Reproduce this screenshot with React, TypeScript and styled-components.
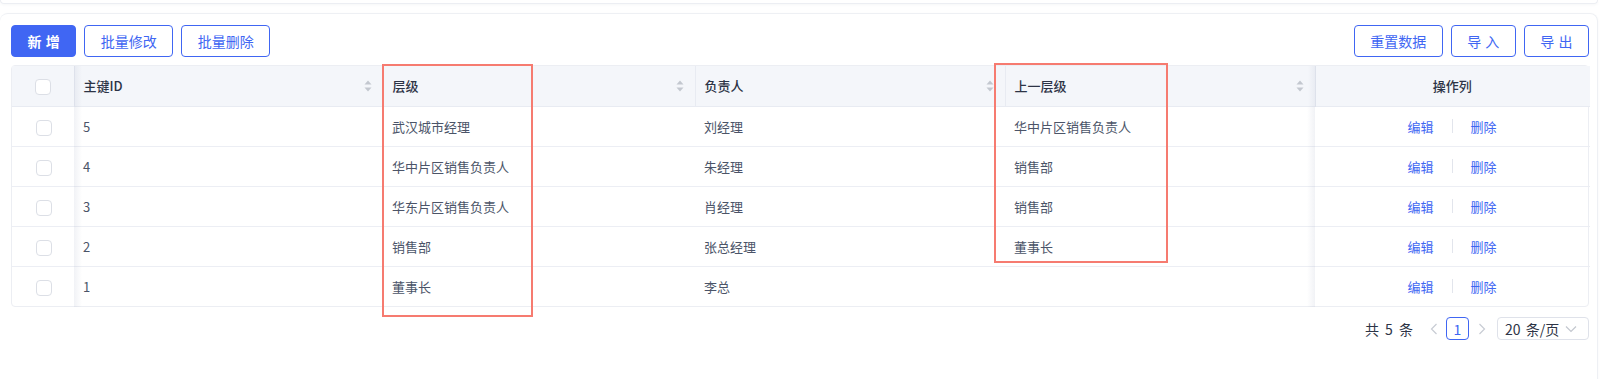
import styled, { createGlobalStyle } from "styled-components";

const GlobalStyle = createGlobalStyle`
  html, body {
    margin: 0;
    padding: 0;
    background: #ffffff;
    font-family: "Noto Sans CJK SC", "Noto Sans", sans-serif;
    overflow: hidden;
  }
`;

const BLUE = "#4066f3";

type Row = {
  id: number;
  level: string;
  owner: string;
  parent: string;
};

const rows: Row[] = [
  { id: 5, level: "武汉城市经理", owner: "刘经理", parent: "华中片区销售负责人" },
  { id: 4, level: "华中片区销售负责人", owner: "朱经理", parent: "销售部" },
  { id: 3, level: "华东片区销售负责人", owner: "肖经理", parent: "销售部" },
  { id: 2, level: "销售部", owner: "张总经理", parent: "董事长" },
  { id: 1, level: "董事长", owner: "李总", parent: "" },
];

const SortIcon = () => (
  <SortWrap>
    <svg width="8" height="12" viewBox="0 0 8 12">
      <path d="M4 0.5 L7.5 4.5 H0.5 Z" fill="#c3c7cf" />
      <path d="M4 11.5 L7.5 7.5 H0.5 Z" fill="#c3c7cf" />
    </svg>
  </SortWrap>
);

const App = () => {
  return (
    <Page>
      <GlobalStyle />
      <TopCard />
      <MainCard>
        <Toolbar>
          <ButtonGroup>
            <Button $primary>新 增</Button>
            <Button>批量修改</Button>
            <Button>批量删除</Button>
          </ButtonGroup>
          <ButtonGroup>
            <Button>重置数据</Button>
            <Button>导 入</Button>
            <Button>导 出</Button>
          </ButtonGroup>
        </Toolbar>

        <TableWrap>
          <Table>
            <colgroup>
              <col style={{ width: 62 }} />
              <col style={{ width: 309 }} />
              <col style={{ width: 312 }} />
              <col style={{ width: 310 }} />
              <col style={{ width: 310 }} />
              <col style={{ width: 275 }} />
            </colgroup>
            <thead>
              <tr>
                <Th $center $fixedLeft>
                  <Checkbox />
                </Th>
                <Th>
                  <HeadCell>
                    主键ID
                    <SortIcon />
                  </HeadCell>
                </Th>
                <Th>
                  <HeadCell>
                    层级
                    <SortIcon />
                  </HeadCell>
                </Th>
                <Th>
                  <HeadCell>
                    负责人
                    <SortIcon />
                  </HeadCell>
                </Th>
                <Th>
                  <HeadCell>
                    上一层级
                    <SortIcon />
                  </HeadCell>
                </Th>
                <Th $center $fixedRight>
                  操作列
                </Th>
              </tr>
            </thead>
            <tbody>
              {rows.map((r) => (
                <tr key={r.id}>
                  <Td $center $fixedLeft>
                    <Checkbox />
                  </Td>
                  <Td>{r.id}</Td>
                  <Td>{r.level}</Td>
                  <Td>{r.owner}</Td>
                  <Td>{r.parent}</Td>
                  <Td $center $fixedRight>
                    <Actions>
                      <LinkText>编辑</LinkText>
                      <Divider />
                      <LinkText>删除</LinkText>
                    </Actions>
                  </Td>
                </tr>
              ))}
            </tbody>
          </Table>
          <Highlight style={{ left: 370, top: -2, width: 147, height: 249 }} />
          <Highlight style={{ left: 982, top: -3, width: 170, height: 196 }} />
        </TableWrap>

        <Pagination>
          <Total>共 5 条</Total>
          <Arrow>
            <svg width="8" height="12" viewBox="0 0 8 12">
              <path d="M6.5 1 L1.5 6 L6.5 11" fill="none" stroke="#c8ccd4" strokeWidth="1.2" />
            </svg>
          </Arrow>
          <PageBox>1</PageBox>
          <Arrow>
            <svg width="8" height="12" viewBox="0 0 8 12">
              <path d="M1.5 1 L6.5 6 L1.5 11" fill="none" stroke="#c8ccd4" strokeWidth="1.2" />
            </svg>
          </Arrow>
          <SizeSelect>
            <span>20 条/页</span>
            <svg width="12" height="8" viewBox="0 0 12 8">
              <path d="M1 1.5 L6 6.5 L11 1.5" fill="none" stroke="#c3c7cf" strokeWidth="1.2" />
            </svg>
          </SizeSelect>
        </Pagination>
      </MainCard>
    </Page>
  );
};

export default App;

const Page = styled.div`
  width: 1602px;
  height: 379px;
  overflow: hidden;
`;

const TopCard = styled.div`
  width: 1596px;
  height: 3px;
  border: 1px solid #eceef3;
  border-top: none;
  border-radius: 0 0 8px 8px;
  box-shadow: 0 1px 3px rgba(30, 40, 80, 0.04);
`;

const MainCard = styled.div`
  width: 1578px;
  min-height: 400px;
  margin-top: 9px;
  padding: 11px 8px 0 11px;
  border: 1px solid #eef0f4;
  border-left: none;
  border-radius: 8px;
  box-shadow: 0 1px 3px rgba(30, 40, 80, 0.04);
`;

const Toolbar = styled.div`
  display: flex;
  justify-content: space-between;
  align-items: center;
  margin-bottom: 8px;
`;

const ButtonGroup = styled.div`
  display: flex;
  gap: 8px;
`;

const Button = styled.button<{ $primary?: boolean }>`
  height: 32px;
  padding: 0 15.5px;
  border: 1px solid ${BLUE};
  border-radius: 4px;
  background: ${(p) => (p.$primary ? BLUE : "#ffffff")};
  color: ${(p) => (p.$primary ? "#ffffff" : BLUE)};
  font-family: inherit;
  font-size: 14px;
  font-weight: ${(p) => (p.$primary ? 600 : 400)};
  word-spacing: 1px;
  line-height: 30px;
  cursor: pointer;
`;

const TableWrap = styled.div`
  position: relative;
  border: 1px solid #eceef3;
  border-radius: 4px;
`;

const Table = styled.table`
  width: 100%;
  table-layout: fixed;
  border-collapse: collapse;
  font-size: 13px;
`;

type CellProps = { $center?: boolean; $fixedLeft?: boolean; $fixedRight?: boolean };

const Th = styled.th<CellProps>`
  height: 40px;
  padding: 0 10px 0 9px;
  background: #f4f6fa;
  color: #2d3446;
  font-weight: 500;
  text-align: ${(p) => (p.$center ? "center" : "left")};
  border-bottom: 1px solid #e8ebf2;
  border-right: 1px solid #e8ebf2;
  box-sizing: border-box;
  position: relative;
  &:last-child {
    border-right: none;
  }
  ${(p) =>
    p.$fixedLeft &&
    `
    &::after {
      content: "";
      position: absolute;
      top: 0; bottom: -1px; right: -8px; width: 8px;
      background: linear-gradient(to right, rgba(140,150,180,0.12), rgba(140,150,180,0));
      z-index: 1;
    }
  `}
  ${(p) =>
    p.$fixedRight &&
    `
    &::before {
      content: "";
      position: absolute;
      top: 0; bottom: -1px; left: -8px; width: 8px;
      background: linear-gradient(to left, rgba(140,150,180,0.12), rgba(140,150,180,0));
      z-index: 1;
    }
  `}
`;

const Td = styled.td<CellProps>`
  height: 40px;
  padding: 0 10px 0 9px;
  color: #4b5468;
  text-align: ${(p) => (p.$center ? "center" : "left")};
  border-bottom: 1px solid #eceef4;
  box-sizing: border-box;
  position: relative;
  tr:last-child & {
    border-bottom: none;
  }
  ${(p) =>
    p.$fixedLeft &&
    `
    &::after {
      content: "";
      position: absolute;
      top: 0; bottom: -1px; right: -8px; width: 8px;
      background: linear-gradient(to right, rgba(140,150,180,0.12), rgba(140,150,180,0));
      z-index: 1;
    }
  `}
  ${(p) =>
    p.$fixedRight &&
    `
    &::before {
      content: "";
      position: absolute;
      top: 0; bottom: -1px; left: -8px; width: 8px;
      background: linear-gradient(to left, rgba(140,150,180,0.12), rgba(140,150,180,0));
      z-index: 1;
    }
  `}
`;

const HeadCell = styled.div`
  display: flex;
  align-items: center;
  justify-content: space-between;
`;

const SortWrap = styled.span`
  display: inline-flex;
  margin-right: 1px;
`;

const Checkbox = styled.span`
  display: inline-block;
  width: 14px;
  height: 14px;
  border: 1px solid #dcdfe6;
  border-radius: 4px;
  background: #ffffff;
  vertical-align: middle;
  margin-left: 2px;
`;

const Actions = styled.div`
  display: flex;
  align-items: center;
  justify-content: center;
  gap: 18px;
`;

const LinkText = styled.span`
  color: ${BLUE};
  font-size: 13px;
`;

const Divider = styled.span`
  width: 1px;
  height: 14px;
  background: #e2e5ec;
`;

const Highlight = styled.div`
  position: absolute;
  border: 2px solid #f67b70;
  pointer-events: none;
  z-index: 2;
`;

const Pagination = styled.div`
  display: flex;
  justify-content: flex-end;
  align-items: center;
  margin-top: 10px;
  font-size: 14px;
  color: #2d3446;
`;

const Total = styled.span`
  margin-right: 16px;
  word-spacing: 3px;
`;

const Arrow = styled.span`
  display: inline-flex;
  width: 9px;
  justify-content: center;
`;

const PageBox = styled.span`
  width: 21px;
  height: 21px;
  margin: 0 8px;
  border: 1px solid ${BLUE};
  border-radius: 4px;
  color: ${BLUE};
  display: flex;
  align-items: center;
  justify-content: center;
  font-size: 14px;
`;

const SizeSelect = styled.span`
  width: 92px;
  height: 23px;
  margin-left: 11px;
  padding: 0 11px 0 7px;
  border: 1px solid #dfe2ea;
  border-radius: 4px;
  box-sizing: border-box;
  display: flex;
  align-items: center;
  justify-content: space-between;
  color: #2d3446;
  word-spacing: 2px;
`;
